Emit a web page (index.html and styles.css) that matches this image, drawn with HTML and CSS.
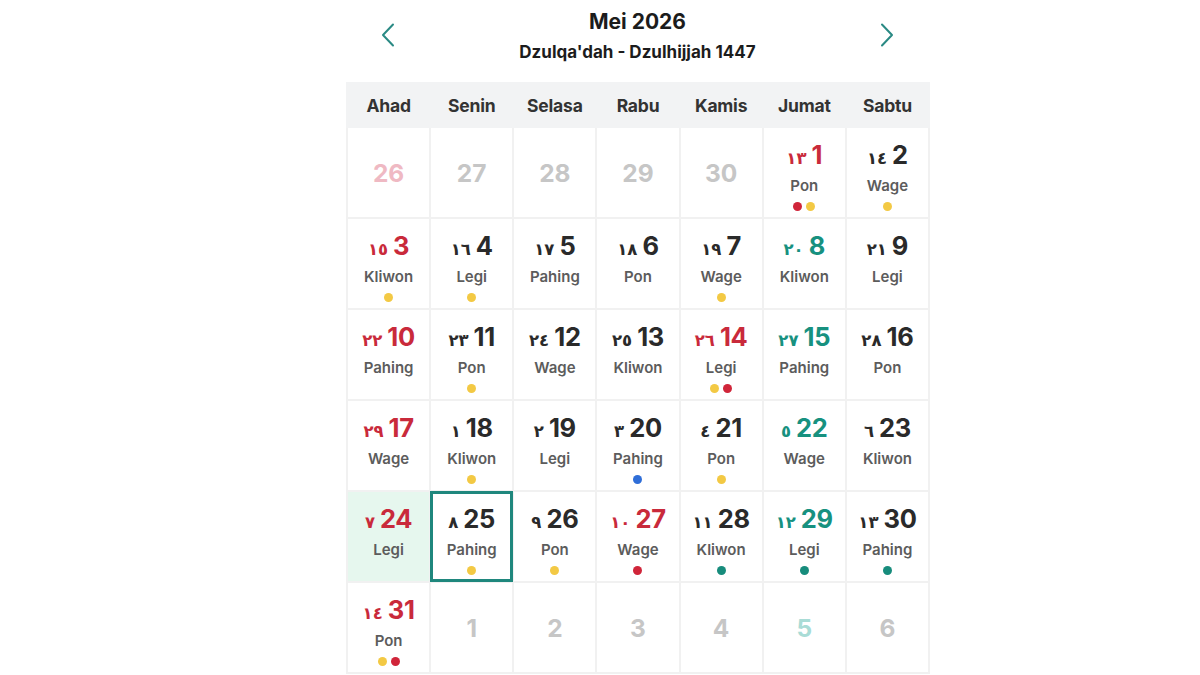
FILE: index.html
```html
<!DOCTYPE html>
<html lang="id">
<head>
<meta charset="utf-8">
<title>Kalender Mei 2026</title>
<link rel="stylesheet" href="styles.css">
</head>
<body>
<div class="calendar">
  <div class="top">
    <button class="nav" aria-label="Sebelumnya">
      <svg width="14" height="24" viewBox="0 0 14 24"><path d="M12 1.5 L2 12 L12 22.5" fill="none" stroke="#2a8a84" stroke-width="2" stroke-linecap="round" stroke-linejoin="round"/></svg>
    </button>
    <div class="titles">
      <div class="month">Mei 2026</div>
      <div class="hijri">Dzulqa'dah - Dzulhijjah 1447</div>
    </div>
    <button class="nav" aria-label="Berikutnya">
      <svg width="14" height="24" viewBox="0 0 14 24"><path d="M2 1.5 L12 12 L2 22.5" fill="none" stroke="#2a8a84" stroke-width="2" stroke-linecap="round" stroke-linejoin="round"/></svg>
    </button>
  </div>
  <div class="weekdays">
    <div>Ahad</div><div>Senin</div><div>Selasa</div><div>Rabu</div><div>Kamis</div><div>Jumat</div><div>Sabtu</div>
  </div>
  <div class="grid">
    <div class="cell other"><span class="o pink">26</span></div>
    <div class="cell other"><span class="o">27</span></div>
    <div class="cell other"><span class="o">28</span></div>
    <div class="cell other"><span class="o">29</span></div>
    <div class="cell other"><span class="o">30</span></div>
    <div class="cell red"><div class="num"><span class="hj">١٣</span><span class="d">1</span></div><div class="pas">Pon</div><div class="dots"><i class="dot r"></i><i class="dot y"></i></div></div>
    <div class="cell"><div class="num"><span class="hj">١٤</span><span class="d">2</span></div><div class="pas">Wage</div><div class="dots"><i class="dot y"></i></div></div>

    <div class="cell red"><div class="num"><span class="hj">١٥</span><span class="d">3</span></div><div class="pas">Kliwon</div><div class="dots"><i class="dot y"></i></div></div>
    <div class="cell"><div class="num"><span class="hj">١٦</span><span class="d">4</span></div><div class="pas">Legi</div><div class="dots"><i class="dot y"></i></div></div>
    <div class="cell"><div class="num"><span class="hj">١٧</span><span class="d">5</span></div><div class="pas">Pahing</div></div>
    <div class="cell"><div class="num"><span class="hj">١٨</span><span class="d">6</span></div><div class="pas">Pon</div></div>
    <div class="cell"><div class="num"><span class="hj">١٩</span><span class="d">7</span></div><div class="pas">Wage</div><div class="dots"><i class="dot y"></i></div></div>
    <div class="cell teal"><div class="num"><span class="hj">٢٠</span><span class="d">8</span></div><div class="pas">Kliwon</div></div>
    <div class="cell"><div class="num"><span class="hj">٢١</span><span class="d">9</span></div><div class="pas">Legi</div></div>

    <div class="cell red"><div class="num"><span class="hj">٢٢</span><span class="d">10</span></div><div class="pas">Pahing</div></div>
    <div class="cell"><div class="num"><span class="hj">٢٣</span><span class="d">11</span></div><div class="pas">Pon</div><div class="dots"><i class="dot y"></i></div></div>
    <div class="cell"><div class="num"><span class="hj">٢٤</span><span class="d">12</span></div><div class="pas">Wage</div></div>
    <div class="cell"><div class="num"><span class="hj">٢٥</span><span class="d">13</span></div><div class="pas">Kliwon</div></div>
    <div class="cell red"><div class="num"><span class="hj">٢٦</span><span class="d">14</span></div><div class="pas">Legi</div><div class="dots"><i class="dot y"></i><i class="dot r"></i></div></div>
    <div class="cell teal"><div class="num"><span class="hj">٢٧</span><span class="d">15</span></div><div class="pas">Pahing</div></div>
    <div class="cell"><div class="num"><span class="hj">٢٨</span><span class="d">16</span></div><div class="pas">Pon</div></div>

    <div class="cell red"><div class="num"><span class="hj">٢٩</span><span class="d">17</span></div><div class="pas">Wage</div></div>
    <div class="cell"><div class="num"><span class="hj">١</span><span class="d">18</span></div><div class="pas">Kliwon</div><div class="dots"><i class="dot y"></i></div></div>
    <div class="cell"><div class="num"><span class="hj">٢</span><span class="d">19</span></div><div class="pas">Legi</div></div>
    <div class="cell"><div class="num"><span class="hj">٣</span><span class="d">20</span></div><div class="pas">Pahing</div><div class="dots"><i class="dot b"></i></div></div>
    <div class="cell"><div class="num"><span class="hj">٤</span><span class="d">21</span></div><div class="pas">Pon</div><div class="dots"><i class="dot y"></i></div></div>
    <div class="cell teal"><div class="num"><span class="hj">٥</span><span class="d">22</span></div><div class="pas">Wage</div></div>
    <div class="cell"><div class="num"><span class="hj">٦</span><span class="d">23</span></div><div class="pas">Kliwon</div></div>

    <div class="cell red today"><div class="num"><span class="hj">٧</span><span class="d">24</span></div><div class="pas">Legi</div></div>
    <div class="cell selected"><div class="num"><span class="hj">٨</span><span class="d">25</span></div><div class="pas">Pahing</div><div class="dots"><i class="dot y"></i></div></div>
    <div class="cell"><div class="num"><span class="hj">٩</span><span class="d">26</span></div><div class="pas">Pon</div><div class="dots"><i class="dot y"></i></div></div>
    <div class="cell red"><div class="num"><span class="hj">١٠</span><span class="d">27</span></div><div class="pas">Wage</div><div class="dots"><i class="dot r"></i></div></div>
    <div class="cell"><div class="num"><span class="hj">١١</span><span class="d">28</span></div><div class="pas">Kliwon</div><div class="dots"><i class="dot t"></i></div></div>
    <div class="cell teal"><div class="num"><span class="hj">١٢</span><span class="d">29</span></div><div class="pas">Legi</div><div class="dots"><i class="dot t"></i></div></div>
    <div class="cell"><div class="num"><span class="hj">١٣</span><span class="d">30</span></div><div class="pas">Pahing</div><div class="dots"><i class="dot t"></i></div></div>

    <div class="cell red"><div class="num"><span class="hj">١٤</span><span class="d">31</span></div><div class="pas">Pon</div><div class="dots"><i class="dot y"></i><i class="dot r"></i></div></div>
    <div class="cell other"><span class="o">1</span></div>
    <div class="cell other"><span class="o">2</span></div>
    <div class="cell other"><span class="o">3</span></div>
    <div class="cell other"><span class="o">4</span></div>
    <div class="cell other"><span class="o lteal">5</span></div>
    <div class="cell other"><span class="o">6</span></div>
  </div>
</div>
</body>
</html>
```

FILE: styles.css
```css
* { box-sizing: border-box; }
html, body { margin: 0; padding: 0; background: #ffffff; }
body {
  font-family: Inter, "Noto Sans", "Liberation Sans", sans-serif;
  color: #1f1f1f;
}
.calendar {
  width: 584px;
  margin-left: 346px;
}
.top {
  height: 82px;
  display: flex;
  align-items: flex-start;
  justify-content: space-between;
  padding: 0 36px 0 35px;
}
.nav {
  border: 0;
  background: none;
  padding: 0;
  margin-top: 23px;
  width: 14px;
  height: 24px;
  display: flex;
}
.titles {
  display: flex;
  flex-direction: column;
  align-items: center;
  padding-top: 9px;
}
.month {
  font-size: 21px;
  font-weight: 700;
  line-height: 26px;
  color: #1c1c1c;
}
.hijri {
  font-size: 17px;
  font-weight: 700;
  line-height: 22px;
  margin-top: 6px;
  color: #1c1c1c;
}
.weekdays {
  height: 46px;
  background: #f2f3f4;
  display: grid;
  grid-template-columns: repeat(7, 1fr);
  padding: 0 2px;
  column-gap: 2px;
  align-items: center;
}
.weekdays div {
  text-align: center;
  font-size: 17.5px;
  font-weight: 700;
  color: #333333;
  letter-spacing: -0.2px;
}
.grid {
  display: grid;
  grid-template-columns: repeat(7, 1fr);
  grid-auto-rows: 89px;
  gap: 2px;
  padding: 0 2px 2px 2px;
  background: #f1f1f1;
}
.cell {
  background: #ffffff;
  display: flex;
  flex-direction: column;
  align-items: center;
  padding-top: 14px;
  position: relative;
}
.cell.other {
  justify-content: center;
  padding-top: 0;
}
.o {
  font-size: 24.5px;
  font-weight: 700;
  color: #c6c6c6;
}
.o.pink { color: #efb9c3; }
.o.lteal { color: #a9dcd6; }
.num {
  display: flex;
  align-items: baseline;
  gap: 5px;
  height: 26px;
  line-height: 26px;
  color: #2a2a2a;
}
.hj {
  font-family: "DejaVu Sans", sans-serif;
  font-size: 16.5px;
  font-weight: 700;
}
.d {
  font-size: 25.5px;
  font-weight: 700;
  letter-spacing: -0.3px;
}
.cell.red .num { color: #c92a3b; }
.cell.teal .num { color: #17917f; }
.pas {
  margin-top: 8px;
  font-size: 15px;
  font-weight: 600;
  line-height: 20px;
  color: #5c5c5c;
}
.dots {
  margin-top: 6px;
  display: flex;
  gap: 4px;
}
.dot {
  width: 9px;
  height: 9px;
  border-radius: 50%;
  display: block;
}
.dot.r { background: #d0253a; }
.dot.y { background: #f3c944; }
.dot.b { background: #2f6ed8; }
.dot.t { background: #178c7c; }
.cell.today { background: #e6f7ee; }
.cell.selected {
  box-shadow: inset 0 0 0 2px #1f877d;
  outline: 1px solid #1f877d;
}
```
